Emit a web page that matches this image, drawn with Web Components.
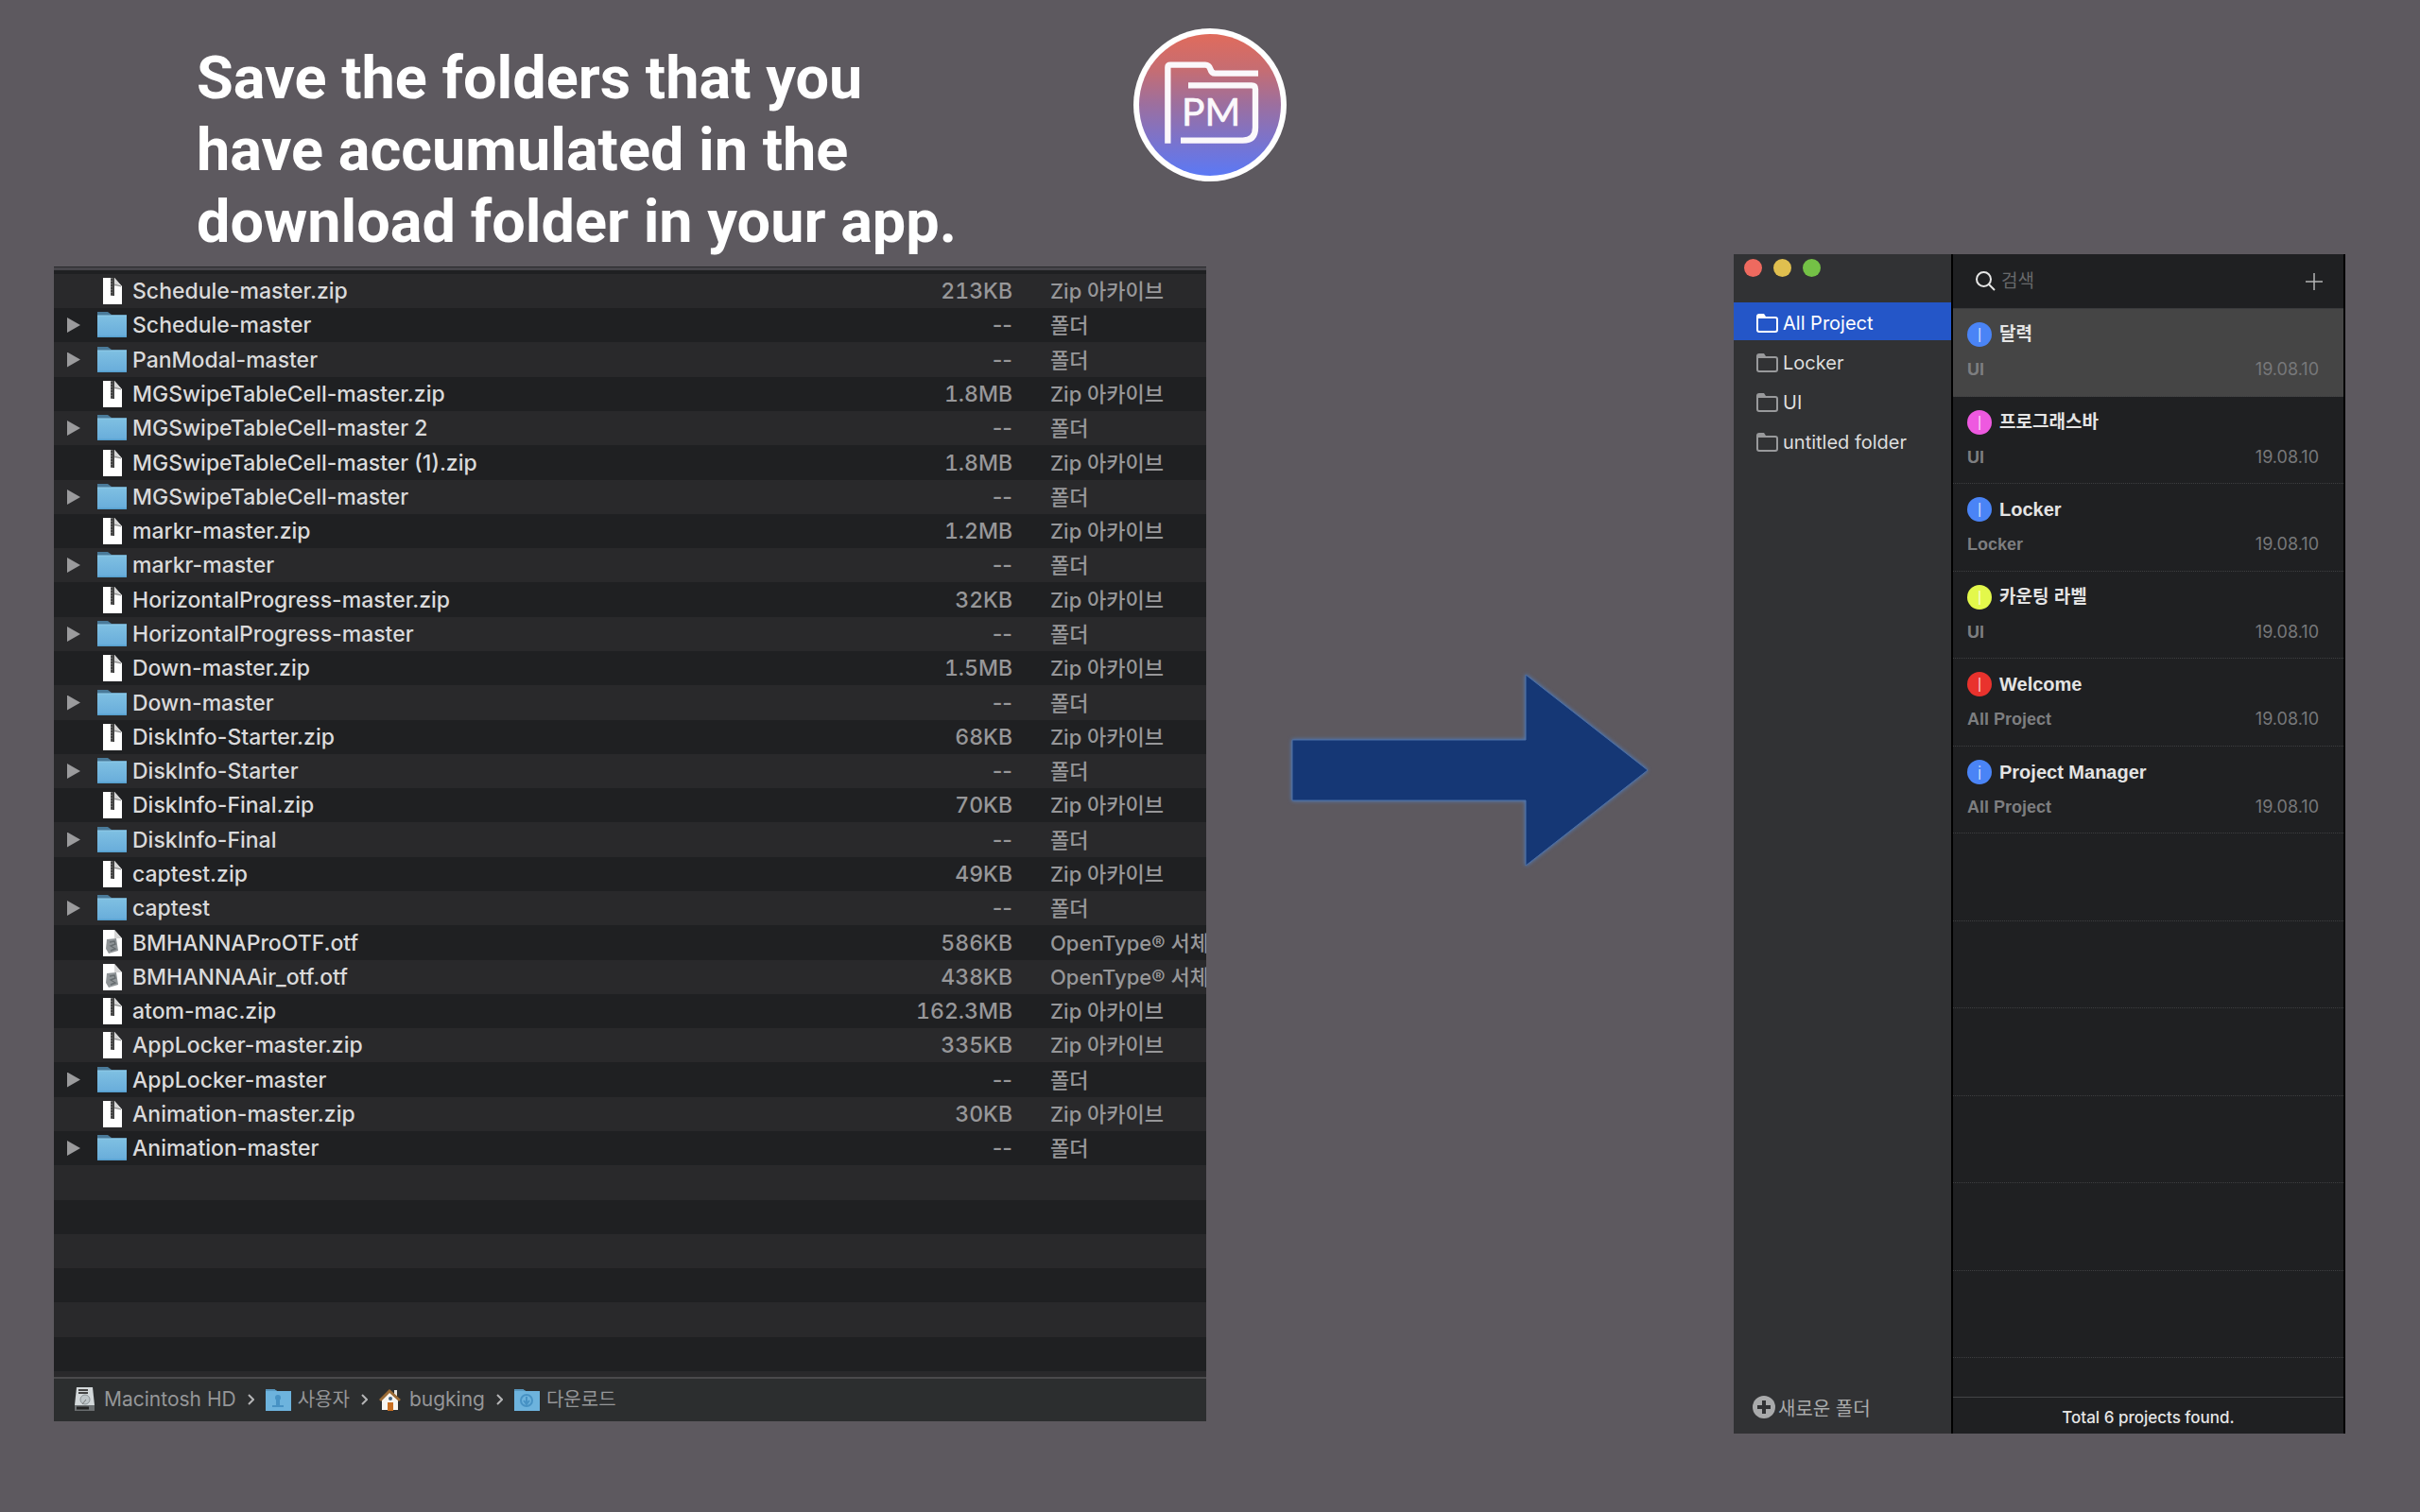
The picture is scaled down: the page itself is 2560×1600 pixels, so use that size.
<!DOCTYPE html>
<html lang="en">
<head>
<meta charset="utf-8">
<title>Project Manager</title>
<style>
  body { margin: 0; min-height: 100vh; background: #5d595f; color: #fff; font-family: Inter, "Noto Sans CJK KR", sans-serif; }
</style>
</head>
<body>
<promo-page>
  <promo-title slot="title">Save the folders that you have accumulated in the download folder in your app.</promo-title>
  <app-badge slot="badge"></app-badge>
  <finder-window slot="source"></finder-window>
  <flow-arrow slot="flow"></flow-arrow>
  <project-window slot="target">
    <project-sidebar slot="sidebar"></project-sidebar>
    <project-list slot="list"></project-list>
  </project-window>
</promo-page>

<script>
function define(name, html) {
  const t = document.createElement('template');
  t.innerHTML = html;
  customElements.define(name, class extends HTMLElement {
    constructor() {
      super();
      this.attachShadow({ mode: 'open' }).append(t.content.cloneNode(true));
    }
  });
}

define('promo-page', `
<style>
  :host { display: block; }
  header { display: grid; grid-template-columns: 1fr auto 1fr; align-items: start; height: 269px; }
  .title { padding: 45px 0 0 208px; }
  .badge { padding-top: 30px; }
  main { display: grid; grid-template-columns: minmax(0, 1219fr) minmax(0, 558fr) minmax(0, 647fr); align-items: start; padding: 0 79px 0 57px; }
  .source { padding-top: 13px; }
  .flow { display: flex; justify-content: center; padding-top: 445px; }
</style>
<header>
  <div class="title"><slot name="title"></slot></div>
  <div class="badge"><slot name="badge"></slot></div>
</header>
<main>
  <div class="source"><slot name="source"></slot></div>
  <div class="flow"><slot name="flow"></slot></div>
  <slot name="target"></slot>
</main>`);

define('promo-title', `
<style>
  :host { display: block; max-width: 820px; }
  h1 { margin: 0; font: 700 63px/76px Roboto, sans-serif; }
</style>
<h1><slot></slot></h1>`);

define('app-badge', `
<style>
  :host { display: block; width: 162px; height: 162px; }
  svg { display: block; width: 100%; height: 100%; }
</style>
<svg viewBox="57 61 486 486" role="img" aria-label="Project Manager logo">
  <defs><linearGradient id="g" x1="0" y1="0" x2="0" y2="1">
    <stop offset="0" stop-color="#e06b5c"/><stop offset=".25" stop-color="#c66d72"/><stop offset=".5" stop-color="#9c6f9f"/><stop offset=".75" stop-color="#7b73cc"/><stop offset="1" stop-color="#5b79f5"/>
  </linearGradient></defs>
  <circle cx="300" cy="304" r="243" fill="#fff"/>
  <circle cx="300" cy="304" r="225" fill="url(#g)"/>
  <g fill="none" stroke="#fbf8fb" stroke-width="19">
    <path d="M166 426V185Q166 177 175 177H285Q297 177 301 190Q305 204 316 204H453"/>
    <path d="M231 242H432Q444 242 444 254V376Q444 417 404 417H207"/>
  </g>
  <text x="210" y="371" font-family="Lato, sans-serif" font-size="122" fill="#fbf8fb" stroke="#fbf8fb" stroke-width="2" stroke-linejoin="round">PM</text>
</svg>`);

define('flow-arrow', `
<style>
  :host { display: block; flex: 0 1 376px; }
  svg { display: block; width: 100%; overflow: visible; filter: drop-shadow(0 0 2px #4f7fc4); }
</style>
<svg viewBox="0 0 376 202" aria-hidden="true">
  <path d="M0 69H247V0L376 101L247 202V133H0Z" fill="#153775" stroke="#4d70a6" stroke-width="1"/>
</svg>`);

define('file-icon', `
<style>
  :host { display: flex; justify-content: center; flex: none; width: 32px; }
  svg { display: none; }
  :host([kind=folder]) .folder, :host([kind=zip]) .zip, :host([kind=otf]) .otf { display: block; }
</style>
<svg class="folder" width="32" height="28" viewBox="0 0 32 28">
  <defs><linearGradient id="f" x1="0" y1="0" x2="0" y2="1"><stop offset="0" stop-color="#7fc0e2"/><stop offset=".9" stop-color="#6aaedb"/><stop offset="1" stop-color="#4f9ac9"/></linearGradient></defs>
  <path d="M0 0H11L15 3H31V8H0Z" fill="#4a7a99"/><path d="M0 4H31V27H0Z" fill="url(#f)"/><path d="M0 4H31" stroke="#8fcbe8"/>
</svg>
<svg class="zip" width="20" height="28" viewBox="0 0 20 28">
  <path d="M0 0H12L20 9V28H0Z" fill="#fff"/><path d="M12 0L20 9H12Z" fill="#d6d6d6"/>
  <path d="M10 0V19" stroke="#444" stroke-width="4"/><path d="M9 0V19" stroke="#999" stroke-dasharray="1 2"/><path d="M12 7L19 9" stroke="#888"/>
</svg>
<svg class="otf" width="20" height="28" viewBox="0 0 20 28">
  <path d="M0 0H12L20 9V28H0Z" fill="#fff"/><path d="M12 0L20 9H12Z" fill="#d6d6d6"/>
  <path d="M4 10L14 9L16 22L6 25L3 20Z" fill="#8f9497"/><path d="M7 13L12 12L13 15L8 17L13 20L8 22" fill="none" stroke="#666c6f" stroke-width="1.4"/>
</svg>`);

define('crumb-icon', `
<style>
  :host { display: block; flex: none; }
  svg { display: none; }
  :host([kind=disk]) .disk, :host([kind=users]) .users, :host([kind=home]) .home, :host([kind=downloads]) .downloads { display: block; }
</style>
<svg class="disk" width="23" height="26" viewBox="0 0 23 26">
  <path d="M3 0H20L22 19H1Z" fill="#d3d8da"/><path d="M1 19H22V25H1Z" fill="#6a6e70"/><path d="M3 22H16" stroke="#222" stroke-width="3"/><path d="M5 3H15M5 6H15" stroke="#444" stroke-width="2"/><circle cx="12" cy="13" r="5" fill="#bfc6c9" stroke="#8b9296"/><path d="M9 18L13 13" stroke="#777"/>
</svg>
<svg class="users" width="27" height="23" viewBox="0 0 27 23">
  <path d="M0 0H9L12 2H27V23H0Z" fill="#6db3dd"/><path d="M0 0H9L12 2H0Z" fill="#5796bd"/><circle cx="13" cy="9" r="3" fill="#4792c4"/><path d="M11 11H15V17H19V19H7V17H11Z" fill="#4792c4"/>
</svg>
<svg class="home" width="23" height="24" viewBox="0 0 23 24">
  <path d="M16 2H19V8H16Z" fill="#e9e4dc"/><path d="M3 10L11 3L20 10V23H3Z" fill="#f7f5f1"/><path d="M1 13L11 3L22 13" fill="none" stroke="#9a6a35" stroke-width="3"/><path d="M9 15H15V24H9Z" fill="#c96f21"/><circle cx="12" cy="11" r="2" fill="#43617e"/>
</svg>
<svg class="downloads" width="27" height="23" viewBox="0 0 27 23">
  <path d="M0 0H9L12 2H27V23H0Z" fill="#6db3dd"/><path d="M0 0H9L12 2H0Z" fill="#5796bd"/><circle cx="13" cy="12" r="6" fill="none" stroke="#4792c4" stroke-width="2"/><path d="M13 8V15M10 12L13 16L16 12" fill="none" stroke="#4792c4" stroke-width="2"/>
</svg>`);

const files = [
  ['Schedule-master.zip', '213KB'], ['Schedule-master'], ['PanModal-master'],
  ['MGSwipeTableCell-master.zip', '1.8MB'], ['MGSwipeTableCell-master 2'],
  ['MGSwipeTableCell-master (1).zip', '1.8MB'], ['MGSwipeTableCell-master'],
  ['markr-master.zip', '1.2MB'], ['markr-master'],
  ['HorizontalProgress-master.zip', '32KB'], ['HorizontalProgress-master'],
  ['Down-master.zip', '1.5MB'], ['Down-master'],
  ['DiskInfo-Starter.zip', '68KB'], ['DiskInfo-Starter'],
  ['DiskInfo-Final.zip', '70KB'], ['DiskInfo-Final'],
  ['captest.zip', '49KB'], ['captest'],
  ['BMHANNAProOTF.otf', '586KB'], ['BMHANNAAir_otf.otf', '438KB'],
  ['atom-mac.zip', '162.3MB'], ['AppLocker-master.zip', '335KB'], ['AppLocker-master'],
  ['Animation-master.zip', '30KB'], ['Animation-master'],
];
const kinds = { folder: '폴더', zip: 'Zip 아카이브', otf: 'OpenType® 서체' };
const fileRow = ([name, size]) => {
  const kind = size ? name.split('.').pop() : 'folder';
  const toggle = size ? '' : `<button aria-label="Expand ${name}"></button>`;
  return `<tr><td><div class="name"><span class="toggle">${toggle}</span><file-icon kind="${kind}"></file-icon><span>${name}</span></div></td><td class="size${size ? '' : ' none'}">${size || '--'}</td><td class="kind">${kinds[kind]}</td></tr>`;
};

define('finder-window', `
<style>
  :host { display: block; background: #1f2022; border-top: 1px solid #29292c; }
  .edge { height: 3px; margin-bottom: 4px; background: #46454a; }
  .rows { overflow: hidden; height: 1167px; }
  table { width: 100%; table-layout: fixed; border-collapse: collapse; font-size: 23px; font-weight: 450; line-height: 30px; }
  tr { height: 36px; }
  tr:nth-child(7n+3), tr:nth-child(7n+6) { height: 37px; }
  tr:nth-child(odd) { background: #29292b; }
  td { padding: 0; white-space: nowrap; overflow: hidden; }
  .size-col { width: 200px; }
  .kind-col { width: 205px; }
  .name { display: flex; align-items: center; color: #dadadb; }
  .toggle { display: flex; flex: none; width: 46px; }
  button { width: 14px; height: 16px; margin: 0 0 0 14px; padding: 0; border: 0; background: #9b9b9d; clip-path: polygon(0 0, 100% 50%, 0 100%); }
  .name file-icon { margin-right: 5px; }
  .size, .kind { color: #979799; font-weight: 500; }
  .size { text-align: right; font-variant-numeric: tabular-nums; }
  .none { font-variant-numeric: normal; }
  .kind { padding-left: 40px; font-size: 22px; }
  nav { display: flex; align-items: center; gap: 12px; height: 44px; padding: 0 0 1px 21px; border-top: 2px solid #4a4a4c; background: #2c2e2f; color: #959698; font-size: 21px; line-height: 28px; }
  a { display: flex; align-items: center; gap: 9px; color: inherit; text-decoration: none; }
  a:lang(ko) { font-size: 20px; gap: 7px; }
  .sep { width: 7px; height: 12px; stroke: #b4b5b6; stroke-width: 2; fill: none; }
</style>
<div class="edge"></div>
<div class="rows">
<table>
  <colgroup><col><col class="size-col"><col class="kind-col"></colgroup>
  <tbody>${files.map(fileRow).join('')}${'<tr><td></td><td></td><td></td></tr>'.repeat(7)}</tbody>
</table>
</div>
<nav aria-label="Path">
  <a href="#"><crumb-icon kind="disk"></crumb-icon>Macintosh HD</a>
  <svg class="sep" viewBox="0 0 7 12"><path d="M1 1L6 6L1 11"/></svg>
  <a href="#" lang="ko"><crumb-icon kind="users"></crumb-icon>사용자</a>
  <svg class="sep" viewBox="0 0 7 12"><path d="M1 1L6 6L1 11"/></svg>
  <a href="#"><crumb-icon kind="home"></crumb-icon>bugking</a>
  <svg class="sep" viewBox="0 0 7 12"><path d="M1 1L6 6L1 11"/></svg>
  <a href="#" lang="ko"><crumb-icon kind="downloads"></crumb-icon>다운로드</a>
</nav>`);

define('project-window', `
<style>
  :host { display: grid; grid-template: minmax(0, 1fr) / minmax(0, 230fr) minmax(0, 417fr); height: 1248px; background: #1f2022; }
</style>
<slot name="sidebar"></slot><slot name="list"></slot>`);

define('project-sidebar', `
<style>
  :host { display: flex; flex-direction: column; background: #313234; color: #dedede; }
  .lights { display: flex; gap: 12px; padding: 5px 0 27px 11px; }
  .lights button { width: 19px; height: 19px; padding: 0; border: 0; border-radius: 50%; }
  .close { background: #ee6a5f; } .min { background: #e0bf4f; } .zoom { background: #74c146; }
  nav { display: flex; flex-direction: column; gap: 2px; flex: 1; }
  nav button, .new { display: flex; align-items: center; padding: 0 0 0 24px; border: 0; background: none; color: inherit; font: inherit; font-size: 20px; text-align: left; }
  nav button { gap: 4px; height: 40px; padding-top: 4px; }
  nav [aria-current] { background: #2456c8; color: #fff; }
  nav svg { width: 24px; height: 22px; fill: none; stroke: #98999b; stroke-width: 2; }
  nav svg .tab { fill: #98999b; stroke: none; }
  nav [aria-current] svg { stroke: #fff; }
  nav [aria-current] .tab { fill: #fff; }
  .new { gap: 3px; height: 28px; margin-bottom: 14px; padding-left: 20px; color: #a9aaab; }
</style>
<div class="lights"><button class="close" aria-label="Close"></button><button class="min" aria-label="Minimize"></button><button class="zoom" aria-label="Zoom"></button></div>
<nav aria-label="Folders">
  ${['All Project', 'Locker', 'UI', 'untitled folder'].map((n, i) => `<button${i ? '' : ' aria-current="true"'}><svg viewBox="0 0 24 22"><path class="tab" d="M0 4Q0 1 3 1H8L10 4V6H0Z"/><path d="M1 5H20Q22 5 22 7V18Q22 20 20 20H3Q1 20 1 18Z"/></svg>${n}</button>`).join('')}
</nav>
<button class="new" lang="ko"><svg width="24" height="24" viewBox="0 0 24 24"><circle cx="12" cy="12" r="12" fill="#a9aaab"/><path d="M12 5V19M5 12H19" stroke="#313234" stroke-width="4"/></svg>새로운 폴더</button>`);

const projects = [
  ['달력', 'UI', '#4a84f6', 'I', 'ko'], ['프로그래스바', 'UI', '#ee59e0', 'I', 'ko'],
  ['Locker', 'Locker', '#4a84f6', 'I', 'en'], ['카운팅 라벨', 'UI', '#e3f84b', 'I', 'ko'],
  ['Welcome', 'All Project', '#e9322d', 'I', 'en'], ['Project Manager', 'All Project', '#4a84f6', 'i', 'en'],
];
define('project-list', `
<style>
  :host { display: flex; flex-direction: column; min-width: 0; border: solid #000; border-width: 0 2px; }
  .search { display: flex; align-items: center; height: 57px; padding: 0 22px 0 24px; border-bottom: 1px solid #3a3b3d; }
  label { display: flex; }
  input { flex: 1; min-width: 0; padding: 0 0 0 6px; border: 0; outline: 0; background: none; color: #ddd; font: inherit; font-size: 19px; }
  input::placeholder { color: #68696b; }
  .add { display: flex; padding: 0; border: 0; background: none; }
  ul { flex: 1; min-height: 0; margin: 0; padding: 0; list-style: none; overflow: hidden; }
  li { box-sizing: border-box; height: 93px; padding: 14px 26px 0 15px; border-bottom: 1px dotted #3e3f41; }
  li:nth-child(even) { height: 92px; }
  li[aria-current] { background: #454545; }
  .line { display: flex; align-items: center; gap: 8px; }
  .line + .line { justify-content: space-between; margin-top: 13px; line-height: 22px; }
  .dot { width: 26px; height: 26px; border-radius: 50%; color: #ffffffbb; font-size: 20px; font-weight: 300; line-height: 28px; text-align: center; }
  .name { font: 700 20px/28px "Liberation Sans", "Noto Sans CJK KR", sans-serif; color: #e4e4e4; }
  .name:lang(ko) { font-size: 19px; }
  .line:first-child { height: 26px; }
  .group { font: 700 18px/22px "Liberation Sans", sans-serif; color: #7d7e80; }
  time { font-size: 18px; color: #77787a; }
  footer { height: 38px; border-top: 1px solid #434446; color: #e6e6e6; font-size: 17px; font-weight: 500; line-height: 42px; text-align: center; }
</style>
<div class="search">
  <label for="q" aria-label="검색"><svg width="21" height="21" viewBox="0 0 21 21" fill="none" stroke="#e6e6e6" stroke-width="2"><circle cx="8.500" cy="8.500" r="7.500"/><path d="M14 14L20 20"/></svg></label>
  <input id="q" type="text" placeholder="검색">
  <button class="add" aria-label="Add"><svg width="18" height="18" viewBox="0 0 18 18" stroke="#b4b4b5" stroke-width="1.500"><path d="M9 0V18M0 9H18"/></svg></button>
</div>
<ul>
  ${projects.map(([n, g, c, l, lang], i) => `<li${i ? '' : ' aria-current="true"'}><div class="line"><span class="dot" style="background:${c}">${l}</span><span class="name" lang="${lang}">${n}</span></div><div class="line"><span class="group">${g}</span><time datetime="2019-08-10">19.08.10</time></div></li>`).join('')}
  ${'<li></li>'.repeat(7)}
</ul>
<footer>Total 6 projects found.</footer>`);
</script>
</body>
</html>
